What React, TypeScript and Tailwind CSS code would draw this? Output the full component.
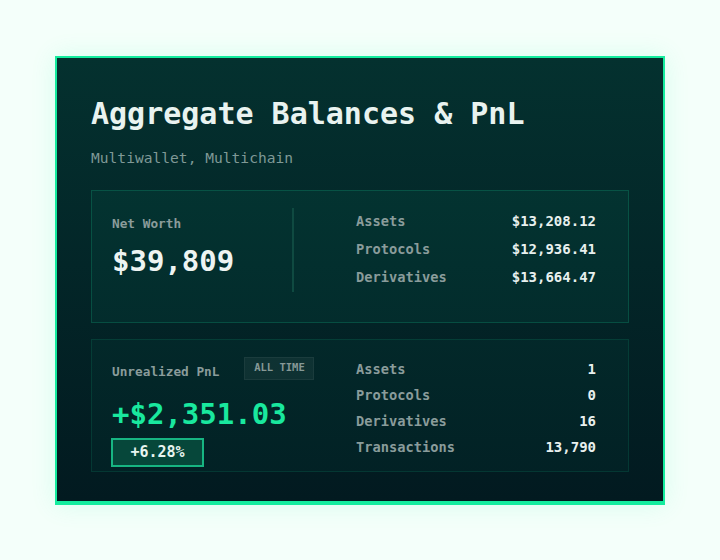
import React from 'react';

type Row = { label: string; value: string };

const balances: Row[] = [
    { label: 'Assets', value: '$13,208.12' },
    { label: 'Protocols', value: '$12,936.41' },
    { label: 'Derivatives', value: '$13,664.47' },
];

const counts: Row[] = [
    { label: 'Assets', value: '1' },
    { label: 'Protocols', value: '0' },
    { label: 'Derivatives', value: '16' },
    { label: 'Transactions', value: '13,790' },
];

const StatList: React.FC<{ rows: Row[]; rowClass: string }> = ({ rows, rowClass }) => (
    <div className="flex-1 pl-[62px] pr-[12px]">
        {rows.map(r => (
            <div key={r.label} className={`flex items-center justify-between font-bold ${rowClass}`}>
                <span className="text-[13.7px] text-[#8a9c9b]">{r.label}</span>
                <span className="text-[14px] text-[#e8f0ee]">{r.value}</span>
            </div>
        ))}
    </div>
);

const App: React.FC = () => {
    return (
        <div className="min-h-screen w-full flex items-center justify-center bg-[#f4fffa] font-['DejaVu_Sans_Mono',monospace]">
            <div className="w-[610px] border-2 border-b-4 border-[#14ec9e] bg-gradient-to-b from-[#04312f] to-[#021a20] shadow-[0_0_24px_rgba(20,236,158,0.12)] px-[34px] pt-[38px] pb-[29px]">
                <h1 className="text-[30px] leading-[36px] font-bold text-[#e9f3f0]">Aggregate Balances &amp; PnL</h1>
                <p className="mt-[16px] text-[14.6px] leading-[20px] text-[#7f9996]">Multiwallet, Multichain</p>

                {/* net worth */}
                <div className="mt-[22px] flex border border-[rgba(24,210,150,0.2)] bg-[rgba(24,200,150,0.06)] px-[20px] pt-[17px] pb-[30px]">
                    <div className="w-[182px] border-r-2 border-[#0f4a41]">
                        <div className="mt-[6px] text-[12.75px] leading-[20px] font-bold text-[#8a9c9b]">Net Worth</div>
                        <div className="mt-[9px] text-[29px] leading-[36px] font-bold text-[#eef4f2]">$39,809</div>
                    </div>
                    <StatList rows={balances} rowClass="h-[28px]" />
                </div>

                {/* pnl */}
                <div className="mt-[16px] flex border border-[rgba(24,210,150,0.13)] bg-[rgba(24,200,150,0.04)] px-[20px] pt-[17px] pb-[4px]">
                    <div className="w-[182px]">
                        <div className="flex items-start">
                            <span className="mt-[5px] text-[12.75px] leading-[20px] font-bold text-[#8a9c9b] whitespace-nowrap">Unrealized PnL</span>
                            <span className="ml-[25px] shrink-0 h-[23px] w-[70px] flex items-center justify-center border border-[rgba(255,255,255,0.05)] bg-[rgba(255,255,255,0.05)] text-[10.5px] font-bold text-[#869997]">ALL TIME</span>
                        </div>
                        <div className="mt-[14px] text-[29px] leading-[36px] font-bold text-[#19e89e] whitespace-nowrap">+$2,351.03</div>
                        <div className="mt-[6px] -ml-[1px] h-[29px] w-[93px] flex items-center justify-center border-2 border-[#17b582] bg-[#06473a] text-[15px] font-bold text-[#e8f5f0]">+6.28%</div>
                    </div>
                    <StatList rows={counts} rowClass="h-[26px]" />
                </div>
            </div>
        </div>
    );
};

export default App;
